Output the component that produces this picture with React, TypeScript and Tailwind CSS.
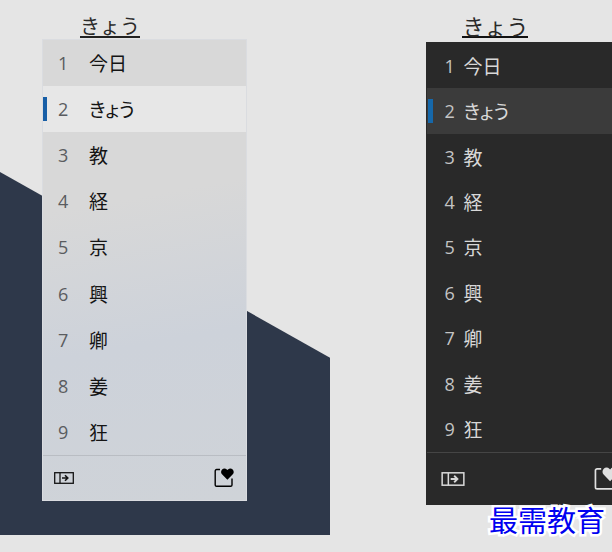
import { useState } from "react";
import clsx from "clsx";

const CANDIDATES = ["今日", "きょう", "教", "経", "京", "興", "卿", "姜", "狂"];

type Theme = "light" | "dark";

interface CandidateWindowProps {
  theme: Theme;
}

function ExpandIcon({ className }: { className?: string }) {
  return (
    <svg viewBox="0 0 20 12" fill="none" stroke="currentColor" strokeWidth="1.3" className={className}>
      <rect x="0.7" y="0.7" width="18.6" height="10.6" />
      <path d="M6 0.7v10.6" />
      <path d="M8 6h5.5M11 3.2L13.8 6L11 8.8" strokeWidth="1.6" />
    </svg>
  );
}

function FavoriteIcon({ className }: { className?: string }) {
  return (
    <svg viewBox="0 0 20 20" fill="none" className={className}>
      <path
        d="M6 1.5H2.600a1.400 1.400 0 0 0-1.400 1.400v14a1.400 1.400 0 0 0 1.400 1.400h14a1.400 1.400 0 0 0 1.400-1.400V10.500"
        stroke="currentColor"
        strokeWidth="1.4"
      />
      <path
        d="M13.400 11.800L8 6.300C6.700 4.900 6.800 2.700 8.100 1.400C9.400 .1 11.500 .1 12.800 1.400L13.400 2L14 1.400C15.300 .1 17.400 .1 18.700 1.400C20 2.700 20.100 4.900 18.800 6.300z"
        fill="currentColor"
      />
    </svg>
  );
}

function CandidateWindow({ theme }: CandidateWindowProps) {
  const [selected, setSelected] = useState(1);
  const dark = theme === "dark";

  return (
    <section
      className={clsx(
        "w-[205px] border",
        dark
          ? "border-[#292929] bg-[#292929] text-[#d8d8d8]"
          : "border-[#dadce0] bg-linear-[170deg] from-[#d8d8d8] from-35% via-[#cdd2da] via-65% to-[#cfd3d8] text-[#141414]"
      )}
    >
      <ol className={clsx("flex flex-col", dark ? "h-[409px]" : "h-[415px]")}>
        {CANDIDATES.map((text, i) => {
          const active = i === selected;
          return (
            <li key={text} className="flex flex-1">
              <button
                type="button"
                onClick={() => setSelected(i)}
                className={clsx(
                  "flex flex-1 items-center text-left",
                  active && (dark ? "bg-[#3b3b3b]" : "bg-[#e7e7e7]")
                )}
              >
                <span
                  className={clsx(
                    "h-6",
                    dark ? "ml-px w-[5px]" : "w-1",
                    active && (dark ? "bg-[#1668aa]" : "bg-[#175ea6]")
                  )}
                />
                <span
                  className={clsx(
                    "ml-[11px] font-['Open_Sans',sans-serif] text-lg",
                    dark ? "w-[19px] text-[#c4c4c4]" : "w-[31px] text-[#5a5c60]"
                  )}
                >
                  {i + 1}
                </span>
                <span className="text-[19px] leading-6 [font-feature-settings:'palt']">{text}</span>
              </button>
            </li>
          );
        })}
      </ol>
      <footer
        className={clsx(
          "flex items-center justify-between border-t",
          dark ? "h-[52px] border-[#454545] pl-[14px] pr-3" : "h-[45px] border-[#b9bdc3] pl-[11px] pr-3"
        )}
      >
        <button type="button" aria-label="Expand candidates">
          <ExpandIcon className={dark ? "h-[14px] w-6" : "h-3 w-5"} />
        </button>
        <button type="button" aria-label="Favorites" className={dark ? "text-[#e0e0e0]" : "text-black"}>
          <FavoriteIcon className={dark ? "size-6" : "size-5"} />
        </button>
      </footer>
    </section>
  );
}

export default function App() {
  return (
    <main
      lang="ja"
      className="relative flex min-h-screen w-full overflow-hidden bg-[#e5e5e5] font-['Noto_Sans_CJK_JP',sans-serif]"
    >
      <div className="relative w-[54%] shrink-0 pl-[42px] pt-[15px]">
        <svg
          viewBox="0 0 331 535"
          preserveAspectRatio="none"
          className="absolute left-0 top-0 h-[535px] w-full"
          aria-hidden="true"
        >
          <path d="M0 172L331 358V535H0z" fill="#2e384a" />
        </svg>
        <div className="relative">
          <p className="mb-px ml-[38px] w-fit border-b-2 border-[#222] text-xl leading-[21px] text-[#2a2a2a]">きょう</p>
          <CandidateWindow theme="light" />
        </div>
      </div>

      <div className="shrink-0 pl-24 pt-[15px]">
        <p className="mb-1 ml-9 w-fit border-b-2 border-[#111] text-[22px] leading-[21px] text-[#2a2a2a]">きょう</p>
        <CandidateWindow theme="dark" />
      </div>

      <p
        lang="zh-CN"
        className="absolute right-[7px] top-[501px] font-['Noto_Sans_CJK_SC',sans-serif] text-[29px] leading-9 text-[#0000f0] [-webkit-text-stroke:5px_white] [paint-order:stroke_fill]"
      >
        最需教育
      </p>
    </main>
  );
}
